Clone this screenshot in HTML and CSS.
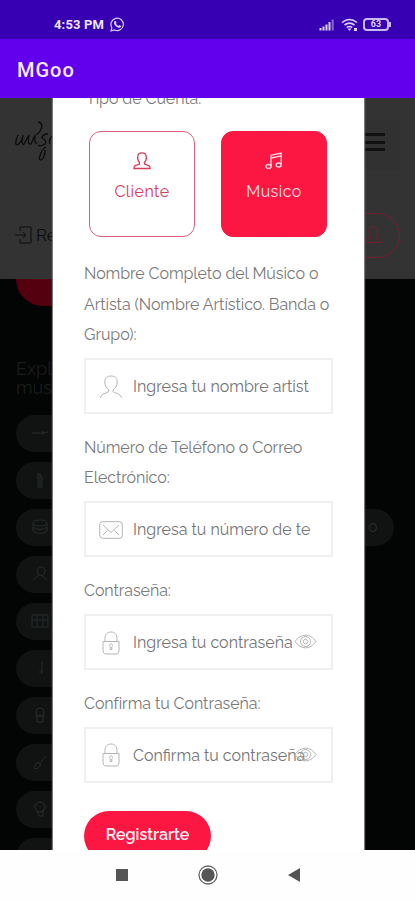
FILE: index.html
```html
<!DOCTYPE html>
<html lang="es">
<head>
<meta charset="utf-8">
<title>MGoo</title>
<link rel="stylesheet" href="styles.css">
</head>
<body>
<svg class="defs" width="0" height="0">
  <defs>
    <symbol id="person" viewBox="0 0 18 18"><path d="M6.500 12v-1.700C4.800 8.900 4.500 6.900 4.700 4.500 4.900 2 6.500.8 9 .8s4.100 1.200 4.300 3.700c.2 2.400-.1 4.400-1.800 5.800V12l4.300 1.700c1 .5 1.300 1.500 1.300 2.800H.9c0-1.300.3-2.300 1.300-2.800z"/></symbol>
    <symbol id="lock" viewBox="0 0 18 24"><path d="M3 11V7.500C3 3.500 5.200 1 9 1s6 2.500 6 6.500V11M1 10.500h16v9.200c0 2-1.200 3.300-3.200 3.300H4.200c-2 0-3.200-1.300-3.200-3.300zM8 18.500h2l-.4-2.500c1.800-1.400.7-3-.6-3s-2.400 1.600-.6 3z"/></symbol>
    <symbol id="eye" viewBox="0 0 23 15"><path d="M1 7.500C4 3.500 7.500 1.200 11.500 1.200S19 3.500 22 7.500c-3 4-6.500 6.300-10.500 6.300S4 11.500 1 7.500z"/><circle cx="11.500" cy="7.500" r="5"/><circle cx="11.500" cy="7.500" r="2.200"/></symbol>
  </defs>
</svg>
<div class="phone">
  <header class="status">
    <span class="clock">4:53 PM</span>
    <svg class="whatsapp" width="15" height="15" viewBox="0 0 15 15"><path d="M1 14l.9-3.300A6.200 6.200 0 1 1 4.500 13z"/><path class="fill" d="M5.300 3.800l1.300 1.900-.6 1c.6 1 1.300 1.700 2.400 2.200l.9-.8 2 1c-.5 1.900-2 2.100-3.800 1.200C5.500 9.300 4.200 7.800 4 6c0-1 .4-1.800 1.300-2.200z"/></svg>
    <span class="space"></span>
    <svg width="16" height="13" viewBox="0 0 16 13"><path class="fill" d="M.5 10h2v2.500h-2zM3.500 8.500h2v4h-2zM6.500 6.500h2v6h-2zM9.500 4h2v8.500h-2z"/><path class="fill faint" d="M12.700 1.500h2v11h-2z"/></svg>
    <svg class="wifi" width="17" height="14" viewBox="0 0 17 14"><path d="M1 4.500Q8.500-1.500 16 4.500M3.500 7q5-3.800 10 0M5.800 9.500q2.700-2 5.400 0"/><path class="fill" d="M6.500 10.500h4l-2 2.500zM13 10h3v3h-3z"/></svg>
    <span class="battery">63</span>
  </header>
  <div class="appbar">MGoo</div>
  <main class="view">
    <div class="page">
      <div class="site-head">
        <div class="brand-row">
          <svg class="brand" width="50" height="44" viewBox="0 0 50 44"><path d="M3 15q-4 9-1 10 5-2 6-10-2 11 1 9l5-9q-2 10 2 9l4-9q-1 9 2 8M23 2q3 0 4 4-1 6-6 9M33 14q-6 0-6 4 5 2 3 6-5 3-7 1M31 27q-5 3-6 9-2 4 1 4 4-2 4-10M37 16q-4 5-2 8"/></svg>
          <div class="burger"><i></i><i></i><i></i></div>
        </div>
        <div class="links-row">
          <svg width="18" height="18" viewBox="0 0 18 18"><path d="M5 5V1h11v16H5v-4M0 9h11M8 6l3 3-3 3"/></svg>
          <span>Registrate</span>
          <div class="account"><svg width="18" height="18"><use href="#person"/></svg></div>
        </div>
      </div>
      <div class="hero"></div>
      <p class="explore">Explora<br>musicos</p>
      <div class="chips">
        <div class="chip"><svg viewBox="0 0 18 18"><path d="M1 9h10l6-1M12 7v4"/></svg></div>
        <div class="chip"><svg viewBox="0 0 18 18"><path d="M7 2v14h4V6zM9 2v14"/></svg></div>
        <div class="row">
          <div class="chip"><svg viewBox="0 0 18 18"><ellipse cx="9" cy="5" rx="7" ry="3"/><path d="M2 5v8q7 5 14 0V5M2 9q7 5 14 0"/></svg></div>
          <div class="chip tail">o</div>
        </div>
        <div class="chip"><svg viewBox="0 0 18 18"><path d="M2 15l6-5Q4 4 9 2q6 0 5 6-2 4-6 2M11 11l5 4"/></svg></div>
        <div class="chip"><svg viewBox="0 0 18 18"><path d="M1 3h16v12H1zM1 8h16M6 3v12M12 3v12"/></svg></div>
        <div class="chip"><svg viewBox="0 0 18 18"><path d="M11 2v13M8 13h3"/></svg></div>
        <div class="chip"><svg viewBox="0 0 18 18"><circle cx="9" cy="6" r="4"/><path d="M4 10h10M6 10v6h6v-6"/></svg></div>
        <div class="chip"><svg viewBox="0 0 18 18"><path d="M3 15l3-6 4 3-4 4zM8 11l7-8"/></svg></div>
        <div class="chip"><svg viewBox="0 0 18 18"><circle cx="9" cy="7" r="5"/><path d="M6 11l2 5h4V9"/></svg></div>
        <div class="chip"></div>
      </div>
    </div>
    <section class="modal">
      <div class="label"><span>Tipo de Cuenta:</span></div>
      <div class="types">
        <div class="type"><svg width="18" height="18"><use href="#person"/></svg><span>Cliente</span></div>
        <div class="type on"><svg width="18" height="18" viewBox="0 0 18 18"><path d="M6 14V3.200L16.200 1v12M6 6l10.200-2.200"/><ellipse cx="3.500" cy="14.500" rx="2.600" ry="2"/><ellipse cx="13.700" cy="13" rx="2.500" ry="2"/></svg><span>Musico</span></div>
      </div>
      <div class="field">
        <div class="label"><span>Nombre Completo del Músico o</span><span>Artista (Nombre Artístico. Banda o</span><span>Grupo):</span></div>
        <div class="input"><svg width="24" height="24" viewBox="0 0 24 24"><path d="M1.500 23q.5-4 5.500-5 3-.7 3-3C7 13 5.800 10 5.800 7 5.800 3 8 1 12 1s6.200 2 6.200 6c0 3-1.200 6-4.200 8 0 2.300 0 2.300 3 3 5 1 5.500 5 5.500 5"/></svg><span>Ingresa tu nombre artist</span></div>
      </div>
      <div class="field">
        <div class="label"><span>Número de Teléfono o Correo</span><span>Electrónico:</span></div>
        <div class="input"><svg width="24" height="18" viewBox="0 0 24 18"><rect x=".7" y=".7" width="22.600" height="16.600" rx="3"/><path d="M4 4l8 7.500L20 4M4 14l4.500-4.500M20 14l-4.500-4.500"/></svg><span>Ingresa tu número de te</span></div>
      </div>
      <div class="field">
        <div class="label"><span>Contraseña:</span></div>
        <div class="input"><svg width="24" height="24"><use href="#lock"/></svg><span>Ingresa tu contraseña</span><svg class="eye" width="23" height="15"><use href="#eye"/></svg></div>
      </div>
      <div class="field">
        <div class="label"><span>Confirma tu Contraseña:</span></div>
        <div class="input"><svg width="24" height="24"><use href="#lock"/></svg><span>Confirma tu contraseña</span><svg class="eye" width="23" height="15"><use href="#eye"/></svg></div>
      </div>
      <div class="submit"><span>Registrarte</span></div>
    </section>
  </main>
  <nav class="nav">
    <svg width="14" height="14" viewBox="0 0 14 14"><path d="M1 1h12v12H1z"/></svg>
    <svg width="20" height="20" viewBox="0 0 20 20"><circle class="ring" cx="10" cy="10" r="9"/><circle cx="10" cy="10" r="6.700"/></svg>
    <svg width="14" height="14" viewBox="0 0 14 14"><path d="M13 0v14L1 7z"/></svg>
  </nav>
</div>
</body>
</html>
```
FILE: styles.css
```css
* { box-sizing: border-box; }
body { margin: 0; font-family: Raleway, Lato, sans-serif; }
svg { fill: none; stroke: currentColor; flex: none; display: block; }
.defs { position: absolute; }
.phone { width: 415px; height: 900px; display: flex; flex-direction: column; overflow: hidden; background: #fff; }

.status { flex: none; height: 39px; background: #3700b3; color: #dccff5; display: flex; align-items: center; padding: 10px 25px 0 54px; font-family: Roboto, sans-serif; }
.status .fill { fill: currentColor; stroke: none; }
.status .faint { opacity: .5; }
.clock { font-size: 13px; font-weight: 700; letter-spacing: .15px; color: #eee6fb; width: 56px; white-space: nowrap; }
.whatsapp { stroke-width: 1.200; }
.space { flex: 1; }
.wifi { margin: 0 5px 0 6px; stroke-width: 1.600; }
.battery { width: 26px; height: 13px; border: 2px solid #cbb8f0; border-radius: 4px; position: relative; font-size: 9px; line-height: 9px; font-weight: 700; text-align: center; margin-right: 1px; }
.battery::after { content: ""; position: absolute; right: -4px; top: 2px; width: 2px; height: 5px; background: #cbb8f0; }
.appbar { flex: none; height: 59px; background: #6200ee; color: #f3eafd; font: 500 20px/62px Roboto, sans-serif; padding-left: 17px; letter-spacing: 1px; }

.view { flex: none; height: 752px; position: relative; overflow: hidden; background: #030404; }
.page { height: 752px; overflow: hidden; }
.site-head { height: 181px; background: #333; color: #0c0c0c; padding: 22px 15px 0; }
.brand-row { display: flex; justify-content: space-between; height: 92px; }
.brand { stroke-width: 1.300; }
.burger { display: flex; flex-direction: column; gap: 4.500px; padding: 13px 15px 0 0; height: 50px; width: 60px; align-items: flex-end; background: #313131; }
.burger i { width: 26px; height: 3px; background: #111; }
.links-row { display: flex; align-items: center; gap: 3px; height: 46px; font-size: 17px; }
.account { margin-left: auto; width: 70px; height: 45px; border: 1px solid #741f30; border-radius: 23px; color: #741f30; display: flex; align-items: center; justify-content: flex-end; padding-right: 17px; }
.hero { width: 130px; height: 27px; margin-left: 16px; background: #55000f; border-radius: 0 0 28px 28px; }
.explore { margin: 53px 0 0 16px; font-size: 18px; line-height: 19px; color: #1b1d1d; }
.chips { display: flex; flex-direction: column; gap: 10px; margin: 18px 0 0 16px; }
.chip { flex: none; width: 120px; height: 37px; border-radius: 19px; background: #111313; color: #292c2c; padding: 9px 0 0 15px; }
.chip svg { width: 18px; height: 18px; }
.row { display: flex; justify-content: space-between; margin-right: 21px; }
.tail { width: 60px; padding: 8px 0 0 34px; font-size: 16px; }

.modal { position: absolute; left: 53px; top: 0; width: 311px; height: 752px; overflow: hidden; background: #fff; padding: 0 31px; box-shadow: 0 0 1px 1px #777; }
.label { font-size: 16px; line-height: 30.500px; letter-spacing: -.08px; color: #7a7a7a; white-space: nowrap; }
.label span { display: block; }
.modal > .label { margin-top: -14px; height: 47px; padding-left: 2px; }
.types { display: flex; gap: 26px; padding-left: 5px; margin-bottom: 22px; }
.type { width: 106px; height: 106px; border: 1px solid #d9627a; border-radius: 12px; color: #d83c5c; display: flex; flex-direction: column; align-items: center; padding-top: 20px; font-size: 16px; letter-spacing: .45px; line-height: 30px; gap: 7px; }
.type svg { stroke-width: 1.300; }
.type.on { background: #fc1642; border-color: #fc1642; color: #ffdce3; }
.field { margin-bottom: 18.700px; }
.input { margin-top: 7.600px; width: 249px; height: 56px; border: 2px solid #efefef; display: flex; align-items: center; padding: 1px 0 0 14px; gap: 9px; font-size: 16px; color: #757575; white-space: nowrap; position: relative; }
.input svg { color: #b5b5b5; stroke-width: 1; margin-left: -1px; margin-right: 1px; }
.input .eye { position: absolute; right: 13px; top: 18px; }
.submit { margin-top: 28px; width: 127px; height: 50px; border-radius: 25px; background: #fc1642; color: #fff1f3; font-size: 16px; line-height: 48px; font-weight: 600; text-align: center; }

.nav { flex: none; height: 50px; background: #fefefe; color: #555; display: flex; align-items: center; justify-content: center; gap: 69px; }
.nav svg { fill: currentColor; stroke: none; }
.nav .ring { fill: none; stroke: #666; stroke-width: 1.300; }
```
